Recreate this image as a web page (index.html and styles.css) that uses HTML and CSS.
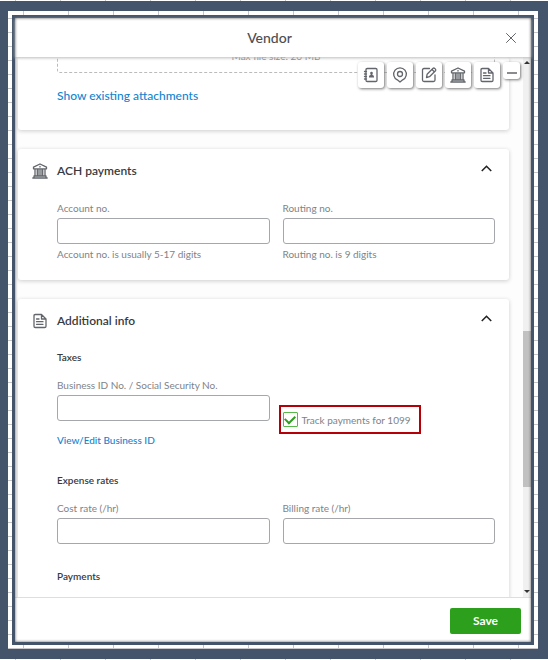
FILE: index.html
```html
<!DOCTYPE html>
<html lang="en">
<head>
<meta charset="utf-8">
<meta name="viewport" content="width=device-width, initial-scale=1">
<title>Vendor</title>
<link rel="stylesheet" href="styles.css">
</head>
<body>
<svg class="sprite" aria-hidden="true">
  <symbol id="bank" viewBox="0 0 16 16"><path d="M1.500 5.800V4.200L8 1l6.500 3.200v1.600zM3 6v7M5.300 6v7M7 6v7M9 6v7M10.700 6v7M13 6v7M2 13h12v2H2zM.8 15h14.400M8 3.300v.8"/></symbol>
  <symbol id="doc" viewBox="0 0 16 16"><path d="M9.500 1.500H3.300Q2 1.500 2 2.800v10.400q0 1.300 1.300 1.300h9.400q1.300 0 1.300-1.300V6zM9.500 1.500V6H14M4.500 6H7M4.500 8.700h6.500M4.500 11.300h6.500"/></symbol>
</svg>
<div class="frame">
  <div class="mat">
    <main class="dialog">
      <header class="title-bar">
        <h1>Vendor</h1>
        <button class="close" type="button" aria-label="Close"><svg viewBox="0 0 10 10"><path d="M.5.5l9 9M9.500.5l-9 9"/></svg></button>
      </header>
      <div class="viewport">
        <div class="content">
          <section class="card attachments">
            <div class="dropzone">Max file size: 20 MB</div>
            <a class="show-link" href="#">Show existing attachments</a>
          </section>
          <section class="card">
            <div class="card-head">
              <svg class="icon"><use href="#bank"/></svg>
              <h2>ACH payments</h2>
              <button class="toggle" type="button" aria-label="Collapse ACH payments"><svg viewBox="0 0 10 6"><path d="M.7 5.300L5 1l4.300 4.300"/></svg></button>
            </div>
            <div class="fields ach">
              <div class="field">
                <label for="account">Account no.</label>
                <input id="account" type="text">
                <span class="hint">Account no. is usually 5-17 digits</span>
              </div>
              <div class="field">
                <label for="routing">Routing no.</label>
                <input id="routing" type="text">
                <span class="hint">Routing no. is 9 digits</span>
              </div>
            </div>
          </section>
          <section class="card">
            <div class="card-head">
              <svg class="icon"><use href="#doc"/></svg>
              <h2>Additional info</h2>
              <button class="toggle" type="button" aria-label="Collapse Additional info"><svg viewBox="0 0 10 6"><path d="M.7 5.300L5 1l4.300 4.300"/></svg></button>
            </div>
            <div class="groups">
              <div class="group">
                <h3>Taxes</h3>
                <div class="fields">
                  <div class="field">
                    <label for="taxid">Business ID No. / Social Security No.</label>
                    <input id="taxid" type="text">
                    <a class="id-link" href="#">View/Edit Business ID</a>
                  </div>
                  <label class="track"><input type="checkbox" checked>Track payments for 1099</label>
                </div>
              </div>
              <div class="group">
                <h3>Expense rates</h3>
                <div class="fields">
                  <div class="field">
                    <label for="cost">Cost rate (/hr)</label>
                    <input id="cost" type="text">
                  </div>
                  <div class="field">
                    <label for="billing">Billing rate (/hr)</label>
                    <input id="billing" type="text">
                  </div>
                </div>
              </div>
              <div class="group"><h3>Payments</h3></div>
            </div>
          </section>
        </div>
        <div class="scrollbar"><i class="up"></i><div class="track-bar"><div class="thumb"></div></div><i class="down"></i></div>
        <nav class="shortcuts" aria-label="Sections">
          <button type="button" aria-label="Name and contact"><svg viewBox="0 0 16 16"><path d="M4.300 1.500h8.400q1.300 0 1.300 1.300v10.400q0 1.300-1.300 1.300H4.300Q3 14.500 3 13.200V2.800q0-1.300 1.300-1.300zM1.500 4.500h2M1.500 7h2M1.500 9.500h2M1.500 12h2"/><path class="solid" d="M8.500 4.800a1.300 1.300 0 0 1 1 2.200l-.2 1c1.200.2 1.700.8 1.700 2v.6H6V10c0-1.200.5-1.800 1.700-2l-.2-1a1.300 1.300 0 0 1 1-2.200z"/></svg></button>
          <button type="button" aria-label="Address"><svg viewBox="0 0 16 16"><path d="M8 15L5.300 12.800A6.300 6.300 0 1 1 10.700 12.800z"/><circle cx="8" cy="7" r="2.500"/></svg></button>
          <button type="button" aria-label="Notes"><svg viewBox="0 0 16 16"><path d="M8.500 1.500H3Q1.500 1.500 1.500 3V13q0 1.500 1.500 1.500h9.500Q14 14.500 14 13V8M5.500 10.500l.6-3.200 6-6q.8-.6 1.600.1l.7.7q.7.800.1 1.600l-6 6zM11 2.500l2.300 2.300"/></svg></button>
          <button type="button" aria-label="ACH payments"><svg><use href="#bank"/></svg></button>
          <button type="button" aria-label="Additional info"><svg><use href="#doc"/></svg></button>
          <button class="minimise" type="button" aria-label="Minimise"><svg viewBox="0 0 10 10"><path d="M0 7h10"/></svg></button>
        </nav>
      </div>
      <footer class="actions"><button class="save" type="button">Save</button></footer>
    </main>
  </div>
</div>
</body>
</html>
```
FILE: styles.css
```css
* { box-sizing: border-box; }

:root {
  --slate: #44546a;
  --grey: #808388;
  --ink: #393a3d;
  --link: #1284cf;
  --grid:
    repeating-linear-gradient(90deg, transparent 0 15px, #c4c6ca 15px 16px, transparent 16px 45px),
    repeating-linear-gradient(transparent 0 4px, #c4c6ca 4px 5px, transparent 5px 14px);
}

body {
  margin: 0;
  height: 100vh;
  padding: 1px 0;
  display: flex;
  background: var(--grid) #fff;
  font: 10px/16px Lato, "Liberation Sans", sans-serif;
  color: var(--ink);
}

h1, h2, h3 { margin: 0; }
a { color: var(--link); text-decoration: none; }
button { font: inherit; padding: 0; border: 0; background: none; color: inherit; }
svg { display: block; fill: none; stroke: #62656b; stroke-width: 1.3; stroke-linejoin: round; stroke-linecap: round; }
.solid { fill: #62656b; stroke: none; }
.sprite { display: none; }

.frame {
  flex: 1;
  display: flex;
  padding: 10px 10px 10px 8px;
  background: var(--slate);
}
.mat {
  flex: 1;
  display: flex;
  min-width: 0;
  padding: 4px;
  background: var(--grid) fixed #fff;
}
.dialog {
  flex: 1;
  min-width: 0;
  display: flex;
  flex-direction: column;
  position: relative;
  border: 3px solid var(--slate);
  background: #fff;
}
.dialog::after {
  content: "";
  position: absolute;
  inset: 0;
  z-index: 4;
  box-shadow: inset 0 0 3px #555;
  pointer-events: none;
}

.title-bar {
  flex: none;
  display: grid;
  grid-template-columns: 1fr auto 1fr;
  align-items: center;
  height: 39px;
  padding: 0 15px 0 8px;
  position: relative;
  z-index: 3;
  box-shadow: 0 1px 3px #bbb;
}
.title-bar h1 { grid-column: 2; font-size: 14px; font-weight: 500; color: #4c4e53; }
.close { justify-self: end; }
.close svg { width: 10px; height: 10px; stroke-width: 1; }

.viewport {
  flex: 1;
  min-height: 0;
  display: flex;
  position: relative;
  overflow: hidden;
  background: #fdfdfd;
}
.content {
  flex: 1;
  display: flex;
  flex-direction: column;
  gap: 19px;
  padding: 0 14px 0 3px;
}
.card {
  flex: none;
  border-radius: 3px;
  background: #fff;
  box-shadow: 0 1px 4px #ccc;
}
.attachments { height: 73px; padding: 0 14px 0 39px; }
.dropzone {
  display: flex;
  align-items: flex-end;
  justify-content: center;
  height: 40px;
  margin-top: -24px;
  padding-bottom: 8px;
  border: 1px dashed #bbb;
  border-radius: 3px;
  color: var(--grey);
}
.show-link { display: inline-block; margin-top: 15px; font-size: 12px; font-weight: 500; }

.card-head { display: flex; align-items: center; height: 44px; padding: 0 17px 0 14px; }
.icon { width: 16px; height: 16px; margin-right: 9px; }
.card-head h2 { flex: 1; font-size: 12px; font-weight: 600; }
.toggle { padding-bottom: 6px; }
.toggle svg { width: 11px; height: 7px; stroke: #222; stroke-width: 1.4; stroke-linecap: butt; stroke-linejoin: miter; }

.fields { display: grid; grid-template-columns: 1fr 1fr; gap: 13px; }
.ach { padding: 7px 14px 18px 39px; }
.field { display: flex; flex-direction: column; align-items: stretch; gap: 2px; color: var(--grey); }
.field input {
  width: 100%;
  height: 26px;
  padding: 0 8px;
  border: 1px solid #a5a7ab;
  border-radius: 3px;
  background: #fff;
  font: inherit;
}
.id-link { margin-top: 9px; font-weight: 500; }

.groups { display: flex; flex-direction: column; gap: 24px; padding: 6px 14px 24px 39px; }
.group { display: flex; flex-direction: column; gap: 12px; }
.group h3 { font-size: 10px; font-weight: 600; }

.track {
  justify-self: start;
  align-self: start;
  display: flex;
  align-items: center;
  gap: 4px;
  height: 29px;
  margin: 28px 0 0 -4px;
  padding: 0 8px 0 2px;
  border: 2px solid #b40006;
  color: var(--grey);
}
.track input {
  appearance: none;
  display: grid;
  place-items: center;
  width: 15px;
  height: 15px;
  margin: 0;
  border: 1px solid #59b84c;
  border-radius: 1px;
}
.track input:checked::before {
  content: "";
  width: 8px;
  height: 5px;
  margin-bottom: 2px;
  border: solid #2ca01c;
  border-width: 0 0 2px 2px;
  transform: rotate(-45deg);
}

.scrollbar {
  flex: none;
  width: 8px;
  display: flex;
  flex-direction: column;
  align-items: center;
  padding: 4px 0;
  background: #f0f0f0;
}
.up, .down { border: solid transparent; }
.up { border-width: 0 3px 3px; border-bottom-color: #333; }
.down { border-width: 3px 3px 0; border-top-color: #333; }
.track-bar { flex: 1; align-self: stretch; padding-top: 267px; }
.thumb { height: 156px; background: #c1c1c1; }

.shortcuts {
  position: absolute;
  top: 5px;
  right: 11px;
  z-index: 2;
  display: flex;
  gap: 3px;
}
.shortcuts button {
  display: grid;
  place-items: center;
  width: 26px;
  height: 26px;
  border-radius: 3px;
  background: #fff;
  box-shadow: 1px 1px 3px #777;
}
.shortcuts svg { width: 16px; height: 16px; }
.shortcuts .minimise { width: 17px; height: 17px; }
.minimise svg { width: 10px; height: 10px; }

.actions {
  flex: none;
  display: flex;
  align-items: center;
  justify-content: flex-end;
  height: 45px;
  padding: 2px 10px 0;
  border-top: 1px solid #dcdee6;
}
.save {
  width: 71px;
  height: 26px;
  border-radius: 2px;
  background: #2ca01c;
  color: #fff;
  font-size: 12px;
  font-weight: 700;
}
```
